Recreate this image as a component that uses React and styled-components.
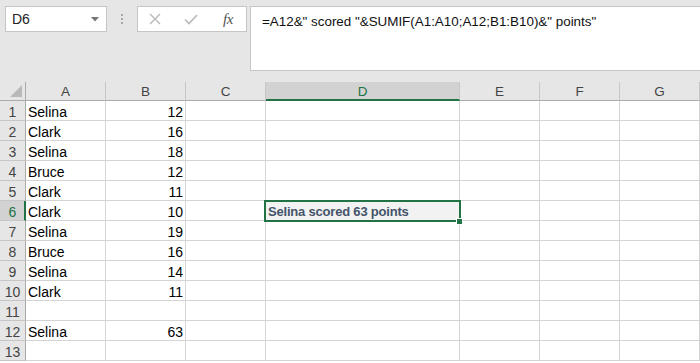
import styled, { createGlobalStyle } from 'styled-components'

const GlobalStyle = createGlobalStyle`
  body {
    margin: 0;
    background: #e6e6e6;
    font-family: 'Liberation Sans', Arial, sans-serif;
  }
`

const green = '#217346'
const gridLine = '#d4d4d4'

const Window = styled.div`
  width: 700px;
  height: 363px;
  overflow: hidden;
  background: #fff;
`

const Toolbar = styled.div`
  height: 82px;
  background: #e6e6e6;
  display: flex;
  align-items: flex-start;
  padding: 6px 0 0 5px;
  box-sizing: border-box;
`

const NameBox = styled.div`
  width: 102px;
  height: 26px;
  box-sizing: border-box;
  background: #fff;
  border: 1px solid #c6c6c6;
  display: flex;
  align-items: center;
  justify-content: space-between;
  padding: 0 7px 0 6px;
  font-size: 14px;
  color: #222;
`

const Grip = styled.div`
  width: 30px;
  height: 26px;
  display: flex;
  flex-direction: column;
  align-items: center;
  justify-content: center;
  gap: 2px;

  span {
    width: 2px;
    height: 2px;
    background: #a8a8a8;
  }
`

const FxBox = styled.div`
  width: 110px;
  height: 26px;
  box-sizing: border-box;
  background: #fff;
  border: 1px solid #c6c6c6;
  display: flex;
  align-items: center;
  padding: 0 0 0 11px;
  gap: 23px;
`

const FxLabel = styled.span`
  font-family: 'Liberation Serif', 'Times New Roman', serif;
  font-style: italic;
  font-size: 15px;
  color: #555;
  margin-left: 2px;
  letter-spacing: -0.5px;
`

const FormulaBar = styled.div`
  flex: 1;
  margin-left: 3px;
  height: 65px;
  box-sizing: border-box;
  background: #fff;
  border: 1px solid #c6c6c6;
  border-right: none;
  padding: 7px 0 0 11px;
  font-size: 13.4px;
  color: #111;
  white-space: nowrap;
`

const Sheet = styled.div`
  display: grid;
  grid-template-columns: 26px 80px 80px 80px 194px 80px 80px 80px;
  grid-template-rows: 19px repeat(13, 20px);
`

const Corner = styled.div`
  background: #e6e6e6;
  border-right: 1px solid #ababab;
  border-bottom: 1px solid #ababab;
  display: flex;
  align-items: flex-end;
  justify-content: flex-end;
  padding: 0 3px 3px 0;
`

const ColHead = styled.div`
  background: ${(p) => (p.active ? '#d2d2d2' : '#e6e6e6')};
  border-right: 1px solid #c6c6c6;
  border-bottom: ${(p) => (p.active ? `2px solid ${green}` : '1px solid #ababab')};
  color: ${(p) => (p.active ? green : '#444')};
  font-size: 13.5px;
  line-height: 19px;
  text-align: center;
`

const RowHead = styled.div`
  background: ${(p) => (p.active ? '#d2d2d2' : '#e6e6e6')};
  border-right: ${(p) => (p.active ? `2px solid ${green}` : '1px solid #ababab')};
  border-bottom: 1px solid #c6c6c6;
  color: ${(p) => (p.active ? green : '#444')};
  font-size: 14px;
  line-height: 22px;
  text-align: center;
  padding-left: ${(p) => (p.active ? '1px' : '0')};
`

const Cell = styled.div`
  position: relative;
  border-right: 1px solid ${gridLine};
  border-bottom: 1px solid ${gridLine};
  padding: 0 2px 0 2px;
  font-size: 14px;
  line-height: 22px;
  white-space: nowrap;
  color: #000;
  text-align: ${(p) => (p.num ? 'right' : 'left')};
`

const ActiveCell = styled(Cell)`
  z-index: 1;
  background: #f2f2f2;
  font-weight: bold;
  font-size: 13px;
  letter-spacing: -0.2px;
  color: #44546a;
`

const Selection = styled.div`
  position: absolute;
  top: -1px;
  left: -2px;
  right: -2px;
  bottom: -2px;
  border: 2px solid ${green};
  pointer-events: none;
`

const FillHandle = styled.div`
  position: absolute;
  right: -4px;
  bottom: -5px;
  width: 5px;
  height: 5px;
  background: ${green};
  border: 1px solid #fff;
`

const columns = ['A', 'B', 'C', 'D', 'E', 'F', 'G']

const data = [
  ['Selina', 12],
  ['Clark', 16],
  ['Selina', 18],
  ['Bruce', 12],
  ['Clark', 11],
  ['Clark', 10],
  ['Selina', 19],
  ['Bruce', 16],
  ['Selina', 14],
  ['Clark', 11],
  ['', ''],
  ['Selina', 63],
  ['', ''],
]

const App = () => {
  return (
    <Window>
      <GlobalStyle />
      <Toolbar>
        <NameBox>
          D6
          <svg width="8" height="5" viewBox="0 0 8 5">
            <path d="M0 0 L8 0 L4 4.5 Z" fill="#777" />
          </svg>
        </NameBox>
        <Grip>
          <span />
          <span />
          <span />
        </Grip>
        <FxBox>
          <svg width="12" height="12" viewBox="0 0 12 12">
            <path d="M1 1 L11 11 M11 1 L1 11" stroke="#b8b8b8" strokeWidth="1.4" fill="none" />
          </svg>
          <svg width="14" height="11" viewBox="0 0 14 11">
            <path d="M1 5.5 L5 9.5 L13 1" stroke="#b8b8b8" strokeWidth="1.6" fill="none" />
          </svg>
          <FxLabel>fx</FxLabel>
        </FxBox>
        <FormulaBar>=A12&amp;" scored "&amp;SUMIF(A1:A10;A12;B1:B10)&amp;" points"</FormulaBar>
      </Toolbar>
      <Sheet>
        <Corner>
          <svg width="12" height="12" viewBox="0 0 12 12">
            <path d="M12 0 L12 12 L0 12 Z" fill="#b9b9b9" />
          </svg>
        </Corner>
        {columns.map((c) => (
          <ColHead key={c} active={c === 'D'}>
            {c}
          </ColHead>
        ))}
        {data.map(([name, score], i) => {
          const row = i + 1
          return [
            <RowHead key={`h${row}`} active={row === 6}>
              {row}
            </RowHead>,
            <Cell key={`a${row}`}>{name}</Cell>,
            <Cell key={`b${row}`} num>
              {score}
            </Cell>,
            <Cell key={`c${row}`} />,
            row === 6 ? (
              <ActiveCell key={`d${row}`}>
                Selina scored 63 points
                <Selection />
                <FillHandle />
              </ActiveCell>
            ) : (
              <Cell key={`d${row}`} />
            ),
            <Cell key={`e${row}`} />,
            <Cell key={`f${row}`} />,
            <Cell key={`g${row}`} />,
          ]
        })}
      </Sheet>
    </Window>
  )
}

export default App
